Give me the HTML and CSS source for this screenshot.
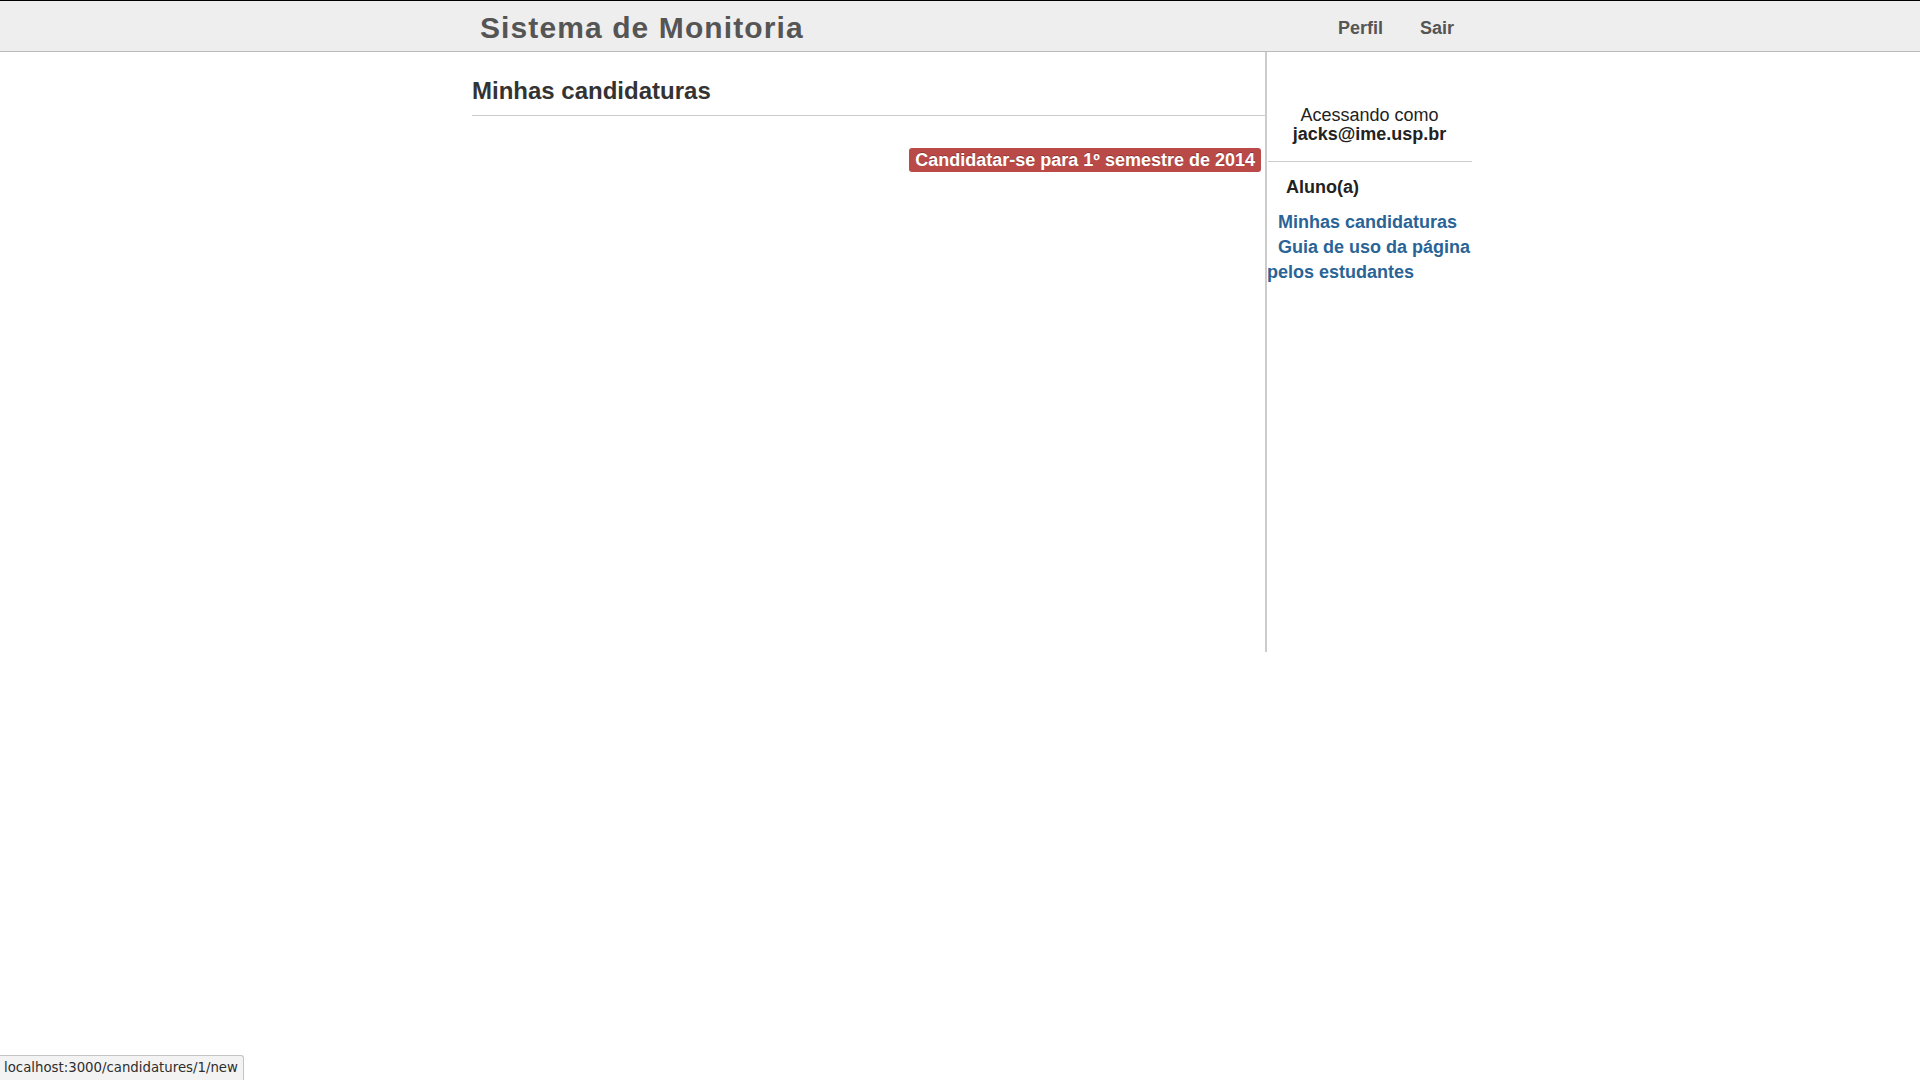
FILE: index.html
```html
<!DOCTYPE html>
<html lang="pt-BR">
<head>
<meta charset="utf-8">
<title>Sistema de Monitoria</title>
<link rel="stylesheet" href="styles.css">
</head>
<body>
<header class="topbar">
  <div class="container topbar-inner">
    <a class="brand" href="#">Sistema de Monitoria</a>
    <nav class="nav">
      <a href="#">Perfil</a>
      <a href="#">Sair</a>
    </nav>
  </div>
</header>
<div class="container page">
  <main class="main">
    <h1 class="page-title">Minhas candidaturas</h1>
    <div class="actions">
      <a class="label-important" href="#">Candidatar-se para 1º semestre de 2014</a>
    </div>
  </main>
  <aside class="sidebar">
    <div class="user">
      <div>Acessando como</div>
      <div class="user-email">jacks@ime.usp.br</div>
    </div>
    <hr class="divider">
    <div class="role">Aluno(a)</div>
    <div class="links">
      <div class="link-item"><a href="#">Minhas candidaturas</a></div>
      <div class="link-item"><a href="#">Guia de uso da página pelos estudantes</a></div>
    </div>
  </aside>
</div>
<div class="statusbar">localhost:3000/candidatures/1/new</div>
</body>
</html>
```

FILE: styles.css
```css
html, body {
  margin: 0;
  padding: 0;
  background: #fff;
}
body {
  font-family: "Liberation Sans", Arial, sans-serif;
  color: #333;
}
a {
  text-decoration: none;
}
.container {
  width: 1000px;
  margin: 0 0 0 calc(50% - 488px);
}
.topbar {
  background: #eeeeee;
  border-top: 1px solid #000;
  border-bottom: 1px solid #bbbbbb;
  height: 50px;
}
.topbar-inner {
  display: flex;
  justify-content: space-between;
  height: 50px;
}
.brand {
  padding: 3px 0 0 8px;
  font-size: 30px;
  font-weight: bold;
  letter-spacing: 1.1px;
  line-height: 47px;
  color: #555;
}
.nav {
  display: flex;
}
.nav a {
  padding: 5px 18px 0;
  font-size: 18px;
  font-weight: bold;
  line-height: 45px;
  color: #555;
}
.nav a + a {
  padding-left: 19px;
}
.page {
  display: flex;
}
.main {
  width: 793px;
  min-height: 576px;
  padding-top: 24px;
  border-right: 2px solid #cccccc;
}
.page-title {
  margin: 0 0 32px;
  padding-bottom: 10px;
  border-bottom: 1px solid #cccccc;
  font-size: 24px;
  line-height: 29px;
  font-weight: bold;
  color: #333;
}
.actions {
  text-align: right;
  padding-right: 4px;
}
.label-important {
  display: inline-block;
  padding: 0 6px;
  line-height: 24px;
  font-size: 18px;
  font-weight: bold;
  color: #fff;
  background: #b94a48;
  border-radius: 3px;
  text-shadow: 0 -1px 0 rgba(0, 0, 0, 0.25);
}
.sidebar {
  width: 205px;
  padding-top: 54px;
}
.user {
  text-align: center;
  font-size: 18px;
  line-height: 19px;
  color: #222;
}
.user-email {
  font-weight: bold;
}
.divider {
  margin: 17px 0 0 1px;
  border: 0;
  border-top: 1px solid #cccccc;
  height: 0;
}
.role {
  margin-top: 14px;
  padding-left: 19px;
  font-size: 18px;
  font-weight: bold;
  line-height: 22px;
  color: #222;
}
.links {
  margin-top: 12px;
}
.link-item {
  text-indent: 11px;
  font-size: 18px;
  line-height: 25px;
  font-weight: bold;
}
.link-item a {
  color: #2a6496;
}
.statusbar {
  position: fixed;
  left: 0;
  bottom: 0;
  height: 24px;
  padding: 0 5px 0 4px;
  background: #f3f3f3;
  border-top: 1px solid #c4c4c4;
  border-right: 1px solid #c4c4c4;
  border-top-right-radius: 3px;
  font-family: "DejaVu Sans", sans-serif;
  font-size: 13.3px;
  line-height: 24px;
  color: #2e2e2e;
}
```
